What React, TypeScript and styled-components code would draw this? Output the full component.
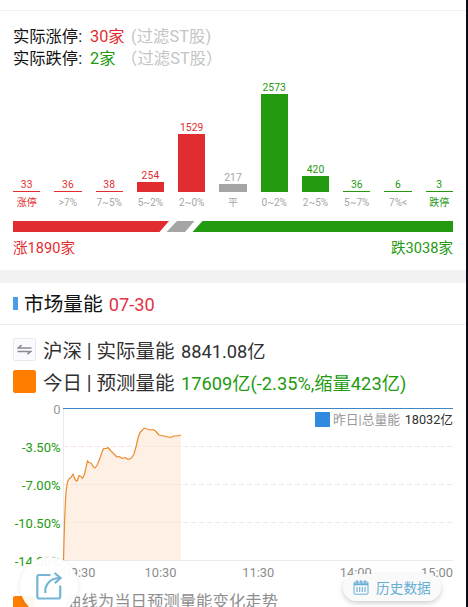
import React from "react";
import styled, { createGlobalStyle } from "styled-components";

const RED = "#e12d30";
const GREEN = "#249a10";
const GREY = "#a5a5a5";

const GlobalStyle = createGlobalStyle`
  * { box-sizing: border-box; }
  body {
    margin: 0;
    background: #fff;
    font-family: Roboto, "Noto Sans CJK SC", sans-serif;
    overflow: hidden;
  }
`;

const Screen = styled.main`
  position: relative;
  width: 468px;
  height: 607px;
  overflow: hidden;
  background: #fff;
  border-right: 2px solid #0b0c14;
`;

const LimitPanel = styled.section`
  height: 270px;
  padding: 10px 13px 0;
`;

const TopRule = styled.div`
  height: 1px;
  margin: 0 -13px 15px;
  background: #f1f1f1;
`;

const LimitRow = styled.div`
  display: grid;
  grid-template-columns: 77px auto 1fr;
  align-items: center;
  height: 22px;
  font-size: 16.3px;
  line-height: 22px;
  white-space: nowrap;
  color: #111;
`;

const LimitCount = styled.span<{ $color: string; $width: number }>`
  width: ${(p) => p.$width}px;
  color: ${(p) => p.$color};
`;

const LimitNote = styled.span`
  color: #c4c4c4;
  letter-spacing: 0.1px;
`;

const Histogram = styled.div`
  display: grid;
  grid-template-columns: repeat(11, 27.3px);
  justify-content: space-between;
  height: 141px;
  margin-top: -1px;
`;

const Column = styled.div<{ $color: string }>`
  display: flex;
  flex-direction: column;
  align-items: center;
  justify-content: flex-end;
  white-space: nowrap;
  color: ${(p) => p.$color};
`;

const BarValue = styled.span`
  font-size: 10.3px;
  line-height: 12px;
  letter-spacing: 0.1px;
`;

const Bar = styled.div<{ $height: number }>`
  width: 100%;
  height: ${(p) => p.$height}px;
  background: currentColor;
`;

const BarLabel = styled.span<{ $strong: boolean }>`
  height: 18px;
  font-size: 10px;
  line-height: 21px;
  color: ${(p) => (p.$strong ? "inherit" : GREY)};
`;

const RatioBar = styled.svg`
  display: block;
  width: 440px;
  height: 11px;
  margin-top: 11px;
`;

const Totals = styled.div`
  display: flex;
  justify-content: space-between;
  margin-top: 5px;
  font-size: 14.6px;
  line-height: 22px;
`;

const Total = styled.span<{ $color: string }>`
  color: ${(p) => p.$color};
`;

const Gap = styled.div`
  height: 13px;
  background: #f2f2f2;
`;

const SectionHeader = styled.header`
  display: flex;
  align-items: center;
  height: 42px;
  padding: 0 13px;
  border-bottom: 1px solid #ededed;
`;

const Marker = styled.i`
  width: 5px;
  height: 13px;
  margin-right: 6px;
  background: #4a9be8;
`;

const Title = styled.h2`
  margin: 2px 0 0;
  font-size: 19.7px;
  line-height: 28px;
  font-weight: 400;
  color: #111;
`;

const DateText = styled.span`
  margin: 2px 0 0 6px;
  font-size: 18.2px;
  line-height: 28px;
  color: #e13445;
`;

const Metrics = styled.div`
  padding: 11px 13px 0;
`;

const MetricRow = styled.div`
  display: grid;
  grid-template-columns: 23px 138px auto;
  column-gap: 7px;
  align-items: center;
  height: 32px;
  white-space: nowrap;
`;

const Swatch = styled.span<{ $color: string; $outlined?: boolean }>`
  display: flex;
  align-items: center;
  justify-content: center;
  width: 23px;
  height: 23px;
  margin-bottom: 5px;
  border-radius: 2px;
  border: 1px solid ${(p) => (p.$outlined ? "#e8e8ee" : p.$color)};
  background: ${(p) => p.$color};
`;

const MetricName = styled.span`
  font-size: 19.5px;
  line-height: 28px;
  color: #303030;
`;

const MetricValue = styled.span<{ $color: string }>`
  margin-left: -7px;
  font-size: 18.25px;
  line-height: 28px;
  color: ${(p) => p.$color};
`;

const TrendChart = styled.svg`
  display: block;
  width: 466px;
  height: 184px;
`;

const Footnote = styled.div`
  display: flex;
  align-items: center;
  height: 26px;
  padding-left: 13px;
  margin-top: 5px;
  font-size: 16.4px;
  line-height: 26px;
  white-space: nowrap;
  color: #8f8f8f;
`;

const FootSwatch = styled.i`
  width: 22px;
  height: 13px;
  margin-right: 30px;
  border-radius: 2px;
  background: #ff7e00;
`;

const ShareButton = styled.button`
  position: absolute;
  left: 20px;
  top: 557px;
  display: flex;
  align-items: center;
  justify-content: center;
  width: 58px;
  height: 58px;
  padding: 0;
  border: 0;
  border-radius: 50%;
  background: rgba(255, 255, 255, 0.95);
  box-shadow: 0 1px 4px rgba(0, 0, 0, 0.12);
`;

const HistoryButton = styled.button`
  position: absolute;
  left: 343px;
  top: 574px;
  display: flex;
  align-items: center;
  gap: 7px;
  width: 98px;
  height: 27px;
  padding: 0 0 0 10px;
  border: 0;
  border-radius: 14px;
  background: rgba(250, 250, 250, 0.97);
  box-shadow: 0 2px 5px rgba(0, 0, 0, 0.2);
  font-family: inherit;
  font-size: 13.7px;
  line-height: 20px;
  white-space: nowrap;
  color: #66aed4;
`;

type Bucket = { value: number; label: string; height: number; color: string };

const buckets: Bucket[] = [
  { value: 33, label: "涨停", height: 1.3, color: RED },
  { value: 36, label: ">7%", height: 1.4, color: RED },
  { value: 38, label: "7~5%", height: 1.5, color: RED },
  { value: 254, label: "5~2%", height: 10, color: RED },
  { value: 1529, label: "2~0%", height: 58.5, color: RED },
  { value: 217, label: "平", height: 8.3, color: GREY },
  { value: 2573, label: "0~2%", height: 98.5, color: GREEN },
  { value: 420, label: "2~5%", height: 16, color: GREEN },
  { value: 36, label: "5~7%", height: 1.5, color: GREEN },
  { value: 6, label: "7%<", height: 0.6, color: GREEN },
  { value: 3, label: "跌停", height: 0.6, color: GREEN },
];

const TREND =
  "M63.5 560L64.5 523L65.3 504L66 492L67.5 482L69 479L71 477.5L73 474L75 479.5L76.5 481L77.5 480.5L79 475.5L81 476.5L82.5 478.5L84 475.5L85.5 470L87.5 460.5L88.5 462.5L91 463L93.5 467L95 468L97 465.5L100 458L103 449.5L104 448.5L106.5 448.5L108 447.5L111 451L114 454L117 457L119 456.5L122.5 458.5L125 457.5L128 459.5L131.5 458L134 454L136.5 445L138 438L140 432.5L142.5 430L144 428L147 429L150.5 430L153 429.5L155.5 431L159 435L164 436L170 437.5L174 436L177 436L181 435";

const axisRows = [
  { y: 409, text: "0", color: "#999" },
  { y: 447, text: "-3.50%", color: GREEN },
  { y: 485, text: "-7.00%", color: GREEN },
  { y: 523, text: "-10.50%", color: GREEN },
  { y: 561, text: "-14.00%", color: GREEN },
];

const times = [
  { x: 79.5, text: "09:30" },
  { x: 160.5, text: "10:30" },
  { x: 258.2, text: "11:30" },
  { x: 355.8, text: "14:00" },
  { x: 437, text: "15:00" },
];

function SwapIcon() {
  return (
    <svg width="15" height="11" viewBox="0 0 15 11" fill="none" stroke="#8a8a90" strokeWidth="1.6">
      <path d="M14.5 4H1.2L4.6 1.2M0.5 7.500H13.800L10.400 10.200" />
    </svg>
  );
}

function ShareIcon() {
  return (
    <svg width="26" height="28" viewBox="0 0 26 28" fill="none" stroke="#73b5d3" strokeWidth="2.2">
      <path d="M14.5 3H3.2Q1.3 3 1.3 5V24.5Q1.3 26.5 3.2 26.5H22.2Q24.200 26.500 24.200 24.500V13.500" />
      <path d="M9.300 21C8.500 12.500 14 6.200 24 6" />
      <path d="M18.500 1L24.700 6L18.800 11.200" />
    </svg>
  );
}

function CalendarIcon() {
  return (
    <svg width="16" height="15" viewBox="0 0 16 15" fill="none" stroke="#66aed4">
      <rect x="1" y="2" width="14" height="12.2" rx="1" />
      <path d="M1 4.3H15" strokeWidth="2" />
      <path d="M4 0.3V3.5M8 0.3V3.5M12 0.3V3.5" strokeWidth="1.4" />
      <path d="M4 7V12M6.7 7V12M9.3 7V12M12 7V12" strokeWidth="1.1" />
    </svg>
  );
}

function Trend() {
  return (
    <TrendChart viewBox="0 400 466 184">
      {[446.5, 484.5, 522.5].map((y) => (
        <path key={y} d={`M63 ${y}H453`} stroke="#e9e9e9" strokeDasharray="5 3" />
      ))}
      <path d="M63.5 409V560M63 560.5H453" stroke="#ebebeb" fill="none" />
      <path d={`${TREND}V560Z`} fill="#fef0e4" />
      <path d="M63 446.5H181M63 484.5H181M63 522.5H181" stroke="#f6e5dc" strokeDasharray="5 3" />
      <path d={TREND} fill="none" stroke="#ec8a2c" strokeWidth="1.2" strokeLinejoin="round" />
      <path d="M63 408.5H453" stroke="#3e86c4" strokeWidth="1.1" />
      {axisRows.map((r) => (
        <text key={r.text} x="60.5" y={r.y + 4.7} textAnchor="end" fontSize="13" fill={r.color}>
          {r.text}
        </text>
      ))}
      {times.map((t) => (
        <text key={t.text} x={t.x} y="577.4" textAnchor="middle" fontSize="12.8" fill="#8c8c8c">
          {t.text}
        </text>
      ))}
      <rect x="315" y="412" width="15" height="15" rx="0.5" fill="#328ae0" />
      <text x="333" y="423.7" fontSize="12.8" fill="#999">
        昨日|总量能
      </text>
      <text x="453" y="423.7" fontSize="12.7" textAnchor="end" fill="#303030">
        18032亿
      </text>
    </TrendChart>
  );
}

export default function App() {
  return (
    <Screen>
      <GlobalStyle />
      <LimitPanel>
        <TopRule />
        <LimitRow>
          <span>实际涨停:</span>
          <LimitCount $color={RED} $width={41}>30家</LimitCount>
          <LimitNote>(过滤ST股)</LimitNote>
        </LimitRow>
        <LimitRow>
          <span>实际跌停:</span>
          <LimitCount $color={GREEN} $width={31}>2家</LimitCount>
          <LimitNote>（过滤ST股）</LimitNote>
        </LimitRow>
        <Histogram>
          {buckets.map((b) => (
            <Column key={b.label} $color={b.color}>
              <BarValue>{b.value}</BarValue>
              <Bar $height={b.height} />
              <BarLabel $strong={b.label.includes("停")}>{b.label}</BarLabel>
            </Column>
          ))}
        </Histogram>
        <RatioBar viewBox="0 0 440 11">
          <path d="M0 0H156L146.500 11H0Z" fill={RED} />
          <path d="M164 0H181.500L172 11H153.500Z" fill={GREY} />
          <path d="M189.500 0H440V11H179.500Z" fill={GREEN} />
        </RatioBar>
        <Totals>
          <Total $color={RED}>涨1890家</Total>
          <Total $color={GREEN}>跌3038家</Total>
        </Totals>
      </LimitPanel>
      <Gap />
      <SectionHeader>
        <Marker />
        <Title>市场量能</Title>
        <DateText>07-30</DateText>
      </SectionHeader>
      <Metrics>
        <MetricRow>
          <Swatch $color="#fafaff" $outlined>
            <SwapIcon />
          </Swatch>
          <MetricName>沪深 | 实际量能</MetricName>
          <MetricValue $color="#303030">8841.08亿</MetricValue>
        </MetricRow>
        <MetricRow>
          <Swatch $color="#ff7e00" />
          <MetricName>今日 | 预测量能</MetricName>
          <MetricValue $color={GREEN}>17609亿(-2.35%,缩量423亿)</MetricValue>
        </MetricRow>
      </Metrics>
      <Trend />
      <Footnote>
        <FootSwatch />
        曲线为当日预测量能变化走势
      </Footnote>
      <ShareButton aria-label="分享">
        <ShareIcon />
      </ShareButton>
      <HistoryButton>
        <CalendarIcon />
        历史数据
      </HistoryButton>
    </Screen>
  );
}
